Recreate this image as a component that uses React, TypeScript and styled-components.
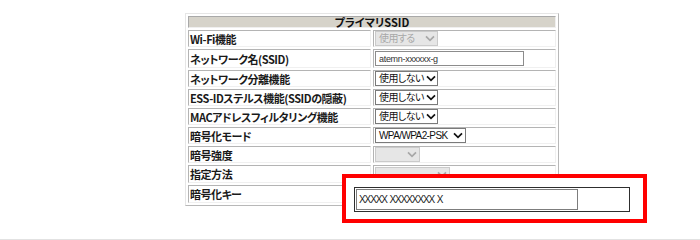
import React from "react";
import styled, { createGlobalStyle } from "styled-components";

const GlobalStyle = createGlobalStyle`
  html, body { margin: 0; padding: 0; background: #fff; }
  *, *::before, *::after { box-sizing: border-box; }
  body { font-family: "Noto Sans CJK JP", "Noto Sans", sans-serif; }
`;

const Page = styled.div`
  position: relative;
  width: 700px;
  height: 240px;
  overflow: hidden;
  padding: 13px 0 0 185px;
  border-bottom: 1px solid #e2e2e2;
`;

const Table = styled.table`
  border-collapse: separate;
  border-spacing: 2px;
  width: 374px;
  border: 1px solid;
  border-color: #e6e6e6 #b8b8b8 #b8b8b8 #e6e6e6;
  table-layout: fixed;
`;

const HeaderCell = styled.th`
  height: 12px;
  padding: 0;
  background: #d6d3ca;
  border: 1px solid;
  border-color: #a9a9a9 #efefef #efefef #a9a9a9;
  font-size: 11px;
  font-weight: 700;
  line-height: 10px;
  color: #111;
  text-align: center;
  font-feature-settings: "palt";
`;

const LabelCell = styled.td<{ $h: number }>`
  width: 165px;
  height: ${(p) => p.$h}px;
  padding: 0 1px;
  border: 1px solid;
  border-color: #b4b4b4 #f0f0f0 #f0f0f0 #b4b4b4;
  font-size: 11px;
  font-weight: 700;
  line-height: 12px;
  color: #1a1a1a;
  white-space: nowrap;
  vertical-align: middle;
  font-feature-settings: "palt";
  letter-spacing: -0.45px;
`;

const ValueCell = styled.td`
  padding: 0 0 0 1px;
  border: 1px solid;
  border-color: #b4b4b4 #f0f0f0 #f0f0f0 #b4b4b4;
  vertical-align: middle;
  line-height: 0;
`;

const SelectBox = styled.div<{ $w: number; $disabled?: boolean }>`
  display: flex;
  align-items: center;
  justify-content: space-between;
  gap: 2px;
  width: ${(p) => p.$w}px;
  height: 15px;
  padding: 0 2px 0 3px;
  border: 1px solid ${(p) => (p.$disabled ? "#cacaca" : "#7a7a7a")};
  background: ${(p) => (p.$disabled ? "#e6e6e6" : "#fff")};
  color: ${(p) => (p.$disabled ? "#a8a8a8" : "#111")};
  font-family: "Liberation Sans", "Noto Sans CJK JP", sans-serif;
  font-size: 10px;
  line-height: 13px;
  white-space: nowrap;
  font-feature-settings: "palt";
  letter-spacing: -0.6px;
`;

const SelectText = styled.span`
  flex: 0 1 auto;
`;

const TextField = styled.div`
  display: flex;
  align-items: center;
  width: 149px;
  height: 15px;
  padding: 0 3px;
  border: 1px solid #8c8c8c;
  background: #fff;
  color: #333;
  font-family: "Liberation Sans", sans-serif;
  font-size: 9px;
  line-height: 12px;
  letter-spacing: -0.3px;
`;

const Callout = styled.div`
  position: absolute;
  left: 342px;
  top: 174px;
  width: 305px;
  height: 49px;
  border: 4px solid #ff0000;
  background: #fff;
  padding: 9px 0 0 8px;
`;

const KeyFrame = styled.div`
  width: 276px;
  height: 25px;
  border: 1px solid #2e2e2e;
  padding: 1px;
`;

const KeyInput = styled.div`
  width: 222px;
  height: 21px;
  border: 1px solid #7d7d7d;
  padding: 0 0 0 2px;
  display: flex;
  align-items: center;
  font-family: "Liberation Sans", sans-serif;
  font-size: 10px;
  letter-spacing: -1.1px;
  word-spacing: 1px;
  color: #222;
  white-space: pre;
`;

const Chevron = ({ color }: { color: string }) => (
  <svg width="10" height="7" viewBox="0 0 10 7" style={{ flex: "none" }}>
    <path d="M1 1.3 L5 5.4 L9 1.3" fill="none" stroke={color} strokeWidth="1.7" />
  </svg>
);

const Select = ({ w, text = "", disabled }: { w: number; text?: string; disabled?: boolean }) => (
  <SelectBox $w={w} $disabled={disabled}>
    <SelectText>{text}</SelectText>
    <Chevron color={disabled ? "#a8a8a8" : "#111"} />
  </SelectBox>
);

type Row = { label: string; h: number; value: React.ReactNode };

const rows: Row[] = [
  { label: "Wi-Fi機能", h: 17, value: <Select w={63} text="使用する" disabled /> },
  { label: "ネットワーク名(SSID)", h: 19, value: <TextField>atemn-xxxxxx-g</TextField> },
  { label: "ネットワーク分離機能", h: 17, value: <Select w={63} text="使用しない" /> },
  { label: "ESS-IDステルス機能(SSIDの隠蔽)", h: 17, value: <Select w={63} text="使用しない" /> },
  { label: "MACアドレスフィルタリング機能", h: 17, value: <Select w={63} text="使用しない" /> },
  { label: "暗号化モード", h: 17, value: <Select w={91} text="WPA/WPA2-PSK" /> },
  { label: "暗号強度", h: 17, value: <Select w={45} disabled /> },
  { label: "指定方法", h: 18, value: <Select w={75} disabled /> },
  { label: "暗号化キー", h: 18, value: null },
];

export default function App() {
  return (
    <>
      <GlobalStyle />
      <Page>
        <Table>
          <thead>
            <tr>
              <HeaderCell colSpan={2}>プライマリSSID</HeaderCell>
            </tr>
          </thead>
          <tbody>
            {rows.map((r) => (
              <tr key={r.label}>
                <LabelCell $h={r.h}>{r.label}</LabelCell>
                <ValueCell>{r.value}</ValueCell>
              </tr>
            ))}
          </tbody>
        </Table>
        <Callout>
          <KeyFrame>
            <KeyInput>XXXXX XXXXXXXX X</KeyInput>
          </KeyFrame>
        </Callout>
      </Page>
    </>
  );
}
